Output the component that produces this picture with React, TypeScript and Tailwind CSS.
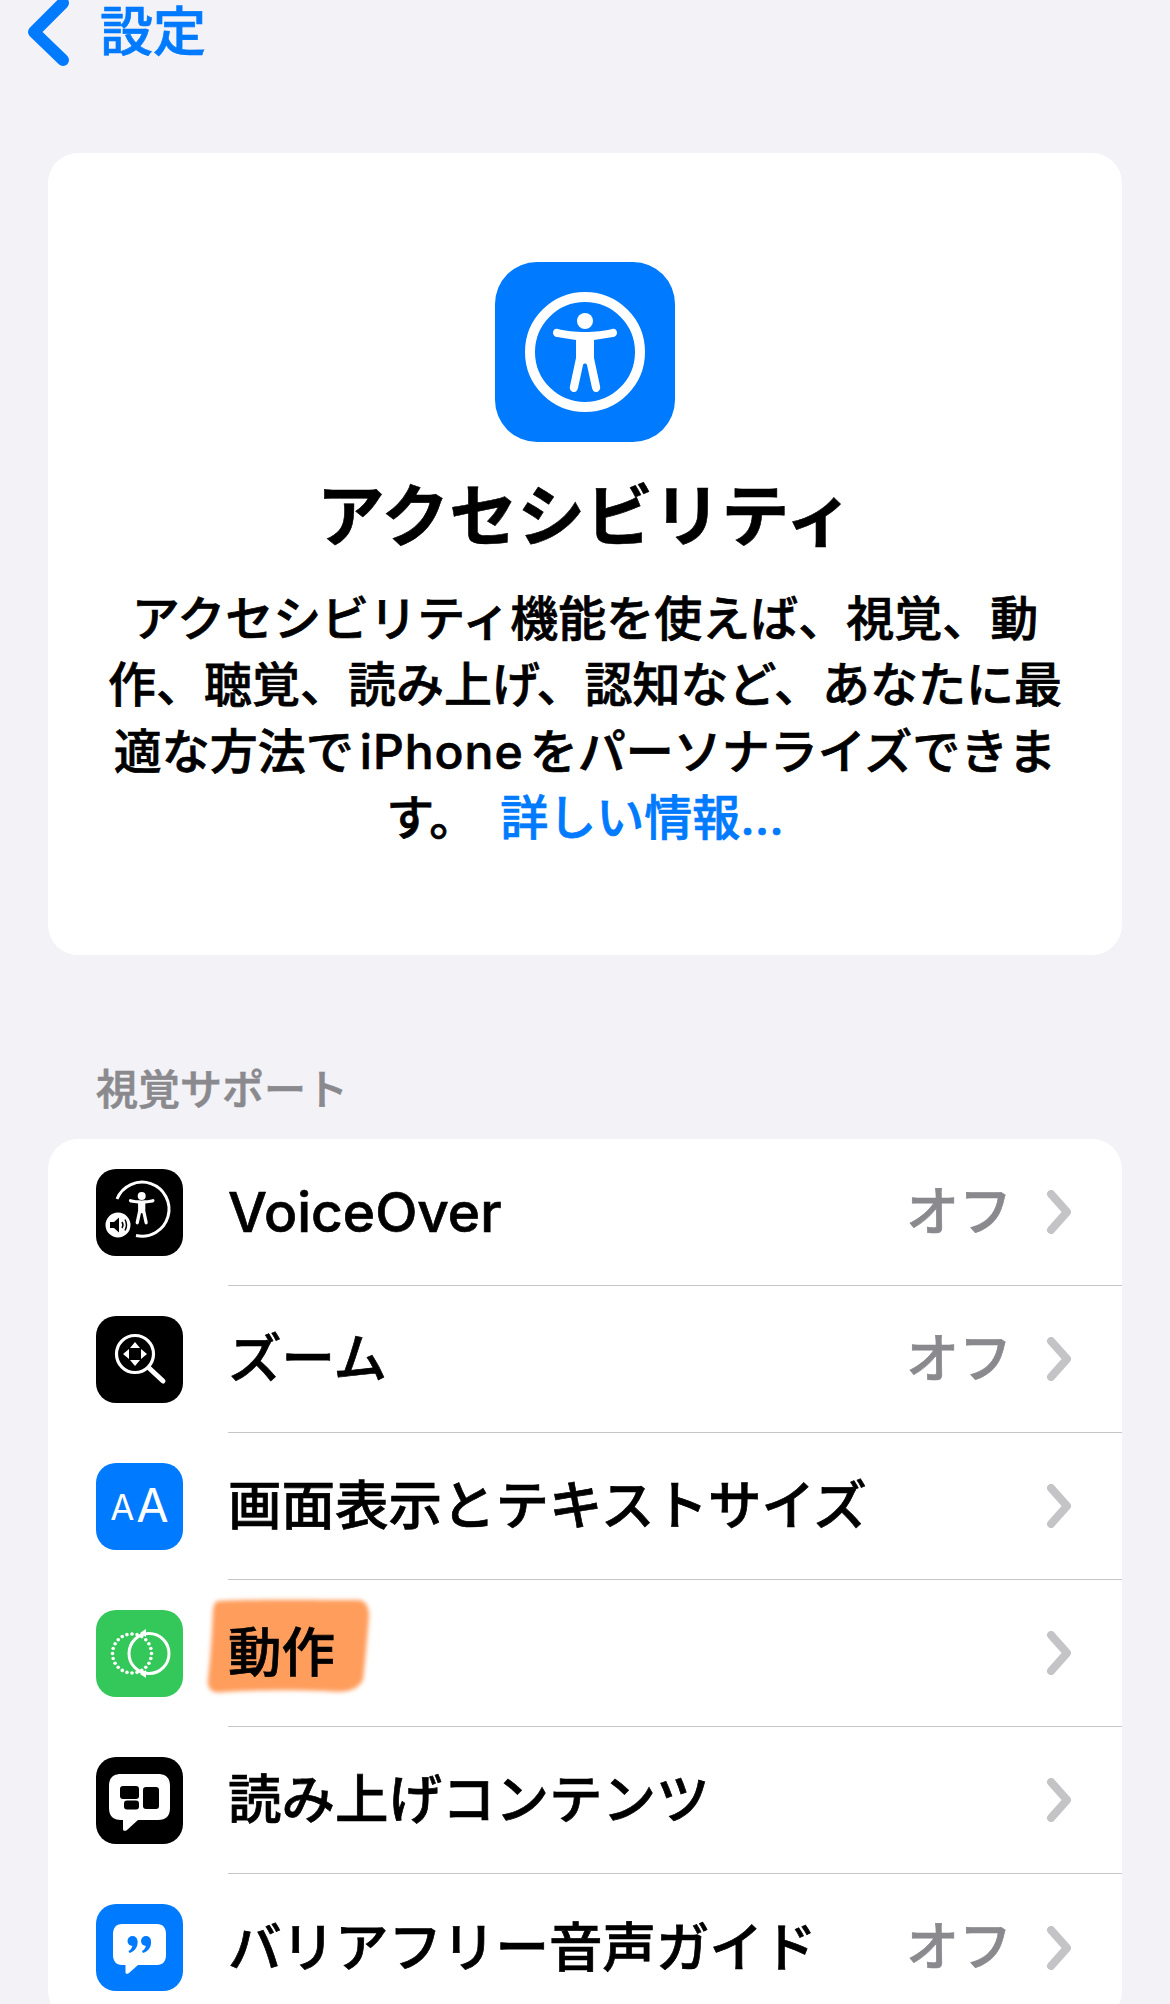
import React from "react";

const heavy = "[-webkit-text-stroke:0.7px_currentColor]";

function Chevron() {
  return (
    <svg width="26" height="44" viewBox="0 0 26 44" className="shrink-0">
      <path d="M5 4 L21 22 L5 40" fill="none" stroke="#c4c4c7" strokeWidth="8" strokeLinecap="round" strokeLinejoin="round" />
    </svg>
  );
}

function Tile({ bg, children }: { bg: string; children: React.ReactNode }) {
  return (
    <div className={`w-[87px] h-[87px] rounded-[20px] shrink-0 flex items-center justify-center ${bg}`}>
      <svg width="87" height="87" viewBox="0 0 87 87">{children}</svg>
    </div>
  );
}

const figurePath =
  "M63 67 C70 69 80 70 90 70 C100 70 110 69 117 67 C120 66 122 68 122 71 C122 73 120 75 118 75 L99 78 L99 96 L105 124 C106 128 103 130 101 130 C99 130 98 129 97 126 L92 103 C91.5 101 88.5 101 88 103 L83 126 C82 129 81 130 79 130 C77 130 74 128 75 124 L81 96 L81 78 L62 75 C60 75 58 73 58 71 C58 68 60 66 63 67 Z";

function VoiceOverIcon() {
  return (
    <Tile bg="bg-black">
      <path d="M21 30 A27 27 0 1 1 40 66.500" fill="none" stroke="#fff" strokeWidth="3" />
      <g transform="translate(9.700 3.400) scale(0.4)" fill="#fff">
        <circle cx="90" cy="59" r="10" />
        <path d={figurePath} />
      </g>
      <circle cx="22" cy="56" r="13.500" fill="#fff" stroke="#000" strokeWidth="2" />
      <path d="M14 53 L18 53 L23 48.500 L23 63.500 L18 59 L14 59 Z" fill="#000" />
      <path d="M26 53 Q28 56 26 59 M29 50.500 Q32 56 29 61.500" fill="none" stroke="#000" strokeWidth="1.500" />
    </Tile>
  );
}

function ZoomIcon() {
  return (
    <Tile bg="bg-black">
      <circle cx="39" cy="38" r="18.500" fill="none" stroke="#fff" strokeWidth="3.200" />
      <path d="M53 52 L67 65" stroke="#fff" strokeWidth="5" strokeLinecap="round" />
      <path d="M39 26 L44 32 L34 32 Z M39 50 L44 44 L34 44 Z M27 38 L33 33 L33 43 Z M51 38 L45 33 L45 43 Z" fill="#fff" />
    </Tile>
  );
}

function TextIcon() {
  return (
    <div className="w-[87px] h-[87px] rounded-[20px] shrink-0 bg-[#007aff] flex items-center justify-center text-white font-['Inter'] leading-none">
      <span className="text-[35px] mr-[2px] mt-[3px]">A</span>
      <span className="text-[47px] -mt-[3px]">A</span>
    </div>
  );
}

function MotionIcon() {
  const dots = [];
  for (let i = 0; i < 24; i++) {
    const a = (i / 24) * Math.PI * 2;
    dots.push(<circle key={i} cx={36 + 19.500 * Math.cos(a)} cy={43.500 + 19.500 * Math.sin(a)} r="1.800" fill="#fff" />);
  }
  return (
    <Tile bg="bg-[#34c759]">
      {dots}
      <circle cx="53" cy="43.500" r="20" fill="none" stroke="#fff" strokeWidth="3" />
      <path d="M44 23 L50 19 L50 27 Z M44 64 L50 60 L50 68 Z" fill="#fff" />
    </Tile>
  );
}

function SpokenIcon() {
  return (
    <Tile bg="bg-black">
      <path d="M25 17 H62 C70 17 74 21 74 29 V51 C74 59 70 63 62 63 H42 L31 73 C29 74.500 27 74 27 72 V63 H25 C17 63 13 59 13 51 V29 C13 21 17 17 25 17 Z" fill="#fff" />
      <rect x="24" y="29" width="19" height="13" rx="3" fill="#000" />
      <rect x="28" y="43.500" width="15" height="9" rx="3" fill="#000" />
      <rect x="47" y="30" width="16" height="22" rx="3" fill="#000" />
    </Tile>
  );
}

function AudioIcon() {
  return (
    <Tile bg="bg-[#007aff]">
      <path d="M26 20 H61 C67 20 70 24 70 30 V51 C70 57 67 61 61 61 H42 L33 69 C31 70.500 29.500 70 29.500 68 V61 H26 C20 61 17 57 17 51 V30 C17 24 20 20 26 20 Z" fill="#fff" />
      <circle cx="36.500" cy="37" r="5" fill="#007aff" />
      <path d="M41.500 37 C42 43 39 47 33.500 49 L32.500 47 C35.500 45.500 36.500 43 36.500 40 Z" fill="#007aff" />
      <circle cx="50" cy="37" r="5" fill="#007aff" />
      <path d="M55 37 C55.500 43 52.500 47 47 49 L46 47 C49 45.500 50 43 50 40 Z" fill="#007aff" />
    </Tile>
  );
}

function Row({ icon, label, value, highlight, last, latin }: { icon: React.ReactNode; label: string; value?: string; highlight?: boolean; last?: boolean; latin?: boolean }) {
  return (
    <div className="flex items-stretch pl-[48px] h-[147px]">
      <div className="w-[87px] shrink-0 flex items-center pb-[1px]">{icon}</div>
      <div className={`ml-[45px] flex-1 flex items-center pr-[50px] ${last ? "" : "border-b border-[#c6c6c8]"}`}>
        <div className={`relative flex-1 ${latin ? "text-[55px]" : "text-[53.5px]"} leading-none text-black font-medium ${heavy}`}>
          {highlight && (
            <svg width="170" height="104" viewBox="0 0 170 104" className="absolute left-[-24px] top-[-31px]">
              <path
                d="M14 6 C50 4 110 5 156 5 C164 8 165 14 165 22 C163 45 161 68 159 85 C152 97 140 98 120 96 C90 95 50 95 20 97 C8 99 3 94 4 84 C7 60 8 35 9 15 C10 9 11 7 14 6 Z"
                fill="#ff9d5c"
                className="blur-[2px]"
              />
            </svg>
          )}
          <span className="relative">{label}</span>
        </div>
        {value && <span className={`text-[53px] leading-none text-[#8a8a8e] font-medium mr-[34px] ${heavy}`}>{value}</span>}
        <Chevron />
      </div>
    </div>
  );
}

export default function App() {
  return (
    <div className="w-[1170px] h-[2004px] overflow-hidden bg-[#f2f2f7] font-['Inter','Noto_Sans_CJK_JP',sans-serif]">
      <div className="h-[153px] flex items-start pl-[26px] text-[#007aff]">
        <svg width="46" height="68" viewBox="0 0 46 68" className="shrink-0">
          <path d="M37 3 L8 32 L37 60" fill="none" stroke="#007aff" strokeWidth="12" strokeLinecap="round" strokeLinejoin="round" />
        </svg>
        <span className={`ml-[28px] text-[53px] leading-[64px] font-medium ${heavy}`}>設定</span>
      </div>

      <div className="mx-[48px] h-[802px] bg-white rounded-[30px] flex flex-col items-center pt-[109px]">
        <div className="w-[180px] h-[180px] rounded-[42px] bg-[#007aff]">
          <svg width="180" height="180" viewBox="0 0 180 180">
            <circle cx="90" cy="90" r="55" fill="none" stroke="#fff" strokeWidth="10" />
            <circle cx="90" cy="59" r="8" fill="#fff" />
            <path d={figurePath} fill="#fff" />
          </svg>
        </div>
        <h1 className="mt-[38px] text-[68px] leading-[72px] font-bold text-black [-webkit-text-stroke:0.6px_currentColor]">アクセシビリティ</h1>
        <div className={`mt-[34px] text-[48px] leading-[66.4px] font-medium text-black text-center whitespace-nowrap ${heavy}`}>
          <div>アクセシビリティ機能を使えば、視覚、動</div>
          <div>作、聴覚、読み上げ、認知など、あなたに最</div>
          <div>
            適な方法で<span className="mx-[6px] tracking-[1px]">iPhone</span>をパーソナライズできま
          </div>
          <div>
            す。 <span className="text-[#007aff] ml-[10px]">詳しい情報...</span>
          </div>
        </div>
      </div>

      <div className={`pl-[96px] mt-[108px] h-[76px] text-[42px] leading-[54px] text-[#8a8a8e] font-medium ${heavy}`}>視覚サポート</div>

      <div className="mx-[48px] bg-white rounded-[30px]">
        <Row icon={<VoiceOverIcon />} label="VoiceOver" value="オフ" latin />
        <Row icon={<ZoomIcon />} label="ズーム" value="オフ" />
        <Row icon={<TextIcon />} label="画面表示とテキストサイズ" />
        <Row icon={<MotionIcon />} label="動作" highlight />
        <Row icon={<SpokenIcon />} label="読み上げコンテンツ" />
        <Row icon={<AudioIcon />} label="バリアフリー音声ガイド" value="オフ" last />
      </div>
    </div>
  );
}
